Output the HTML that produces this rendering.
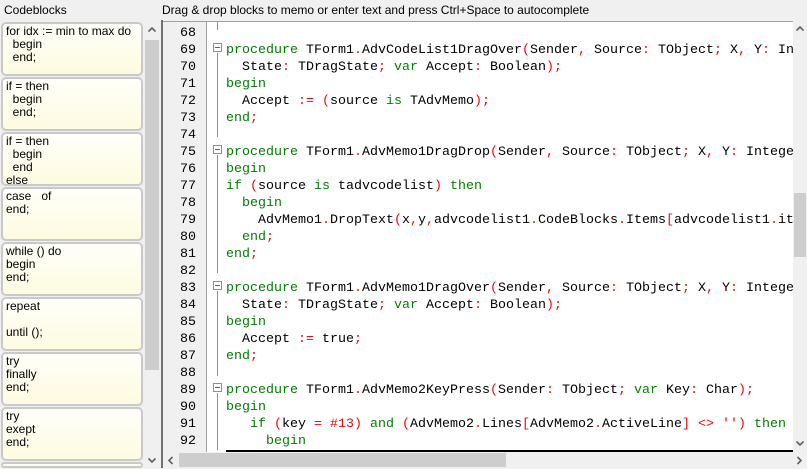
<!DOCTYPE html>
<html><head><meta charset="utf-8"><style>
*{margin:0;padding:0;box-sizing:border-box}
html,body{width:807px;height:469px;overflow:hidden}
body{background:#f0f0f0;font-family:"Liberation Sans",sans-serif;position:relative}
.hdr{position:absolute;top:0;height:20px;font-size:12px;line-height:20px;color:#000;white-space:nowrap}
.list{position:absolute;left:0;top:0;width:144px;height:468px;overflow:hidden}
.item{position:absolute;left:1px;width:142px;height:54px;border:2px solid #c9c9c9;border-radius:5px;background:linear-gradient(#fffffa,#fdfbe0);font-size:12px;line-height:13px;padding:1px 0 0 3px;white-space:pre;overflow:hidden;color:#000}
.vs{position:absolute;left:144px;top:22px;width:16px;height:445px;background:#f0f0f0;overflow:hidden}
.div{position:absolute;left:161px;top:20px;width:2px;height:448px;background:#707070}
.memo{position:absolute;left:163px;top:21px;width:630px;height:431px;background:#fff;border-top:1px solid #a0a0a0;overflow:hidden}
.gut{position:absolute;left:0;top:0;width:44px;height:100%;background:#f0f0f0;border-right:1px solid #a0a0a0}
.code{position:absolute;left:0;top:3px;font-family:"Liberation Mono",monospace;font-size:13.33px;line-height:17px;white-space:pre}
.ln{position:absolute;left:0;width:33px;text-align:right;color:#000}
.cl{position:absolute;left:63px;color:#000}
.k{color:#008000}
.r{color:#ff0000}
.fold{position:absolute;left:50px;width:9px;height:9px;border:1px solid #909090;background:#fff}
.fold:after{content:"";position:absolute;left:1px;top:3px;width:5px;height:1px;background:#606060}
.vl{position:absolute;left:54px;width:1px;background:#909090}
</style></head><body>
<div class="hdr" style="left:4px">Codeblocks</div>
<div class="hdr" style="left:162px">Drag &amp; drop blocks to memo or enter text and press Ctrl+Space to autocomplete</div>

<div class="list">
<div class="item" style="top:22px">for idx := min to max do
  begin
  end;</div>
<div class="item" style="top:77px">if = then
  begin
  end;</div>
<div class="item" style="top:132px">if = then
  begin
  end
else</div>
<div class="item" style="top:187px">case   of
end;</div>
<div class="item" style="top:242px">while () do
begin
end;</div>
<div class="item" style="top:297px">repeat

until ();</div>
<div class="item" style="top:352px">try
finally
end;</div>
<div class="item" style="top:407px">try
exept
end;</div>
<div class="item" style="top:462px;height:6px">    </div>
</div>

<div class="vs">
<svg width="16" height="16" style="position:absolute;top:0"><path d="M4.5 9.5L8 6l3.5 3.5" stroke="#606060" stroke-width="1.6" fill="none"/></svg>
<div style="position:absolute;left:1px;top:18px;width:14px;height:330px;background:#cdcdcd"></div>
<svg width="16" height="15" style="position:absolute;top:430px"><path d="M4.5 6.5L8 10l3.5-3.5" stroke="#606060" stroke-width="1.6" fill="none"/></svg>
</div>
<div class="div"></div>

<div class="memo">
<div class="gut"></div>
<div class="vl" style="top:0;height:8px"></div>
<div class="vl" style="top:31px;height:70px"></div>
<div class="vl" style="top:100px;height:15px"></div>
<div class="vl" style="top:133px;height:118px"></div>
<div class="vl" style="top:269px;height:85px"></div>
<div class="vl" style="top:371px;height:57px"></div>
<div class="fold" style="top:21px"></div>
<div class="fold" style="top:123px"></div>
<div class="fold" style="top:259px"></div>
<div class="fold" style="top:361px"></div>
<div class="code">
<div class="ln" style="top:0">68</div>
<div class="ln" style="top:17px">69</div><div class="cl" style="top:17px"><span class="k">procedure</span> TForm1<span class="r">.</span>AdvCodeList1DragOver<span class="r">(</span>Sender<span class="r">,</span> Source<span class="r">:</span> TObject<span class="r">;</span> X<span class="r">,</span> Y<span class="r">:</span> In</div>
<div class="ln" style="top:34px">70</div><div class="cl" style="top:34px">  State<span class="r">:</span> TDragState<span class="r">;</span> <span class="k">var</span> Accept<span class="r">:</span> Boolean<span class="r">);</span></div>
<div class="ln" style="top:51px">71</div><div class="cl" style="top:51px"><span class="k">begin</span></div>
<div class="ln" style="top:68px">72</div><div class="cl" style="top:68px">  Accept <span class="r">:=</span> <span class="r">(</span>source <span class="k">is</span> TAdvMemo<span class="r">);</span></div>
<div class="ln" style="top:85px">73</div><div class="cl" style="top:85px"><span class="k">end</span><span class="r">;</span></div>
<div class="ln" style="top:102px">74</div>
<div class="ln" style="top:119px">75</div><div class="cl" style="top:119px"><span class="k">procedure</span> TForm1<span class="r">.</span>AdvMemo1DragDrop<span class="r">(</span>Sender<span class="r">,</span> Source<span class="r">:</span> TObject<span class="r">;</span> X<span class="r">,</span> Y<span class="r">:</span> Intege</div>
<div class="ln" style="top:136px">76</div><div class="cl" style="top:136px"><span class="k">begin</span></div>
<div class="ln" style="top:153px">77</div><div class="cl" style="top:153px"><span class="k">if</span> <span class="r">(</span>source <span class="k">is</span> tadvcodelist<span class="r">)</span> <span class="k">then</span></div>
<div class="ln" style="top:170px">78</div><div class="cl" style="top:170px">  <span class="k">begin</span></div>
<div class="ln" style="top:187px">79</div><div class="cl" style="top:187px">    AdvMemo1<span class="r">.</span>DropText<span class="r">(</span>x<span class="r">,</span>y<span class="r">,</span>advcodelist1<span class="r">.</span>CodeBlocks<span class="r">.</span>Items<span class="r">[</span>advcodelist1<span class="r">.</span>it</div>
<div class="ln" style="top:204px">80</div><div class="cl" style="top:204px">  <span class="k">end</span><span class="r">;</span></div>
<div class="ln" style="top:221px">81</div><div class="cl" style="top:221px"><span class="k">end</span><span class="r">;</span></div>
<div class="ln" style="top:238px">82</div>
<div class="ln" style="top:255px">83</div><div class="cl" style="top:255px"><span class="k">procedure</span> TForm1<span class="r">.</span>AdvMemo1DragOver<span class="r">(</span>Sender<span class="r">,</span> Source<span class="r">:</span> TObject<span class="r">;</span> X<span class="r">,</span> Y<span class="r">:</span> Intege</div>
<div class="ln" style="top:272px">84</div><div class="cl" style="top:272px">  State<span class="r">:</span> TDragState<span class="r">;</span> <span class="k">var</span> Accept<span class="r">:</span> Boolean<span class="r">);</span></div>
<div class="ln" style="top:289px">85</div><div class="cl" style="top:289px"><span class="k">begin</span></div>
<div class="ln" style="top:306px">86</div><div class="cl" style="top:306px">  Accept <span class="r">:=</span> true<span class="r">;</span></div>
<div class="ln" style="top:323px">87</div><div class="cl" style="top:323px"><span class="k">end</span><span class="r">;</span></div>
<div class="ln" style="top:340px">88</div>
<div class="ln" style="top:357px">89</div><div class="cl" style="top:357px"><span class="k">procedure</span> TForm1<span class="r">.</span>AdvMemo2KeyPress<span class="r">(</span>Sender<span class="r">:</span> TObject<span class="r">;</span> <span class="k">var</span> Key<span class="r">:</span> Char<span class="r">);</span></div>
<div class="ln" style="top:374px">90</div><div class="cl" style="top:374px"><span class="k">begin</span></div>
<div class="ln" style="top:391px">91</div><div class="cl" style="top:391px">   <span class="k">if</span> <span class="r">(</span>key <span class="r">=</span> <span class="r">#13)</span> <span class="k">and</span> <span class="r">(</span>AdvMemo2<span class="r">.</span>Lines<span class="r">[</span>AdvMemo2<span class="r">.</span>ActiveLine<span class="r">]</span> <span class="r">&lt;&gt;</span> <span class="r">'')</span> <span class="k">then</span></div>
<div class="ln" style="top:408px">92</div><div class="cl" style="top:408px">     <span class="k">begin</span></div>
</div>
<div style="position:absolute;left:63px;top:428px;width:567px;height:2px;background:#000"></div>
</div>

<div style="position:absolute;left:793px;top:21px;width:14px;height:431px;background:#f0f0f0;overflow:hidden">
<svg width="14" height="16" style="position:absolute;top:0"><path d="M3.5 9.5L7 6l3.5 3.5" stroke="#606060" stroke-width="1.6" fill="none"/></svg>
<div style="position:absolute;left:1px;top:172px;width:12px;height:64px;background:#cdcdcd"></div>
<svg width="14" height="16" style="position:absolute;top:414px"><path d="M3.5 6.5L7 10l3.5-3.5" stroke="#606060" stroke-width="1.6" fill="none"/></svg>
</div>
<div style="position:absolute;left:163px;top:452px;width:644px;height:16px;background:#f0f0f0;overflow:hidden">
<svg width="16" height="16" style="position:absolute;left:0"><path d="M9.5 5L6 8.5l3.5 3.5" stroke="#606060" stroke-width="1.6" fill="none"/></svg>
<div style="position:absolute;left:16px;top:1px;width:327px;height:14px;background:#cdcdcd"></div>
<svg width="16" height="16" style="position:absolute;left:628px"><path d="M6.5 5L10 8.5l-3.5 3.5" stroke="#606060" stroke-width="1.6" fill="none"/></svg>
</div>
</body></html>
